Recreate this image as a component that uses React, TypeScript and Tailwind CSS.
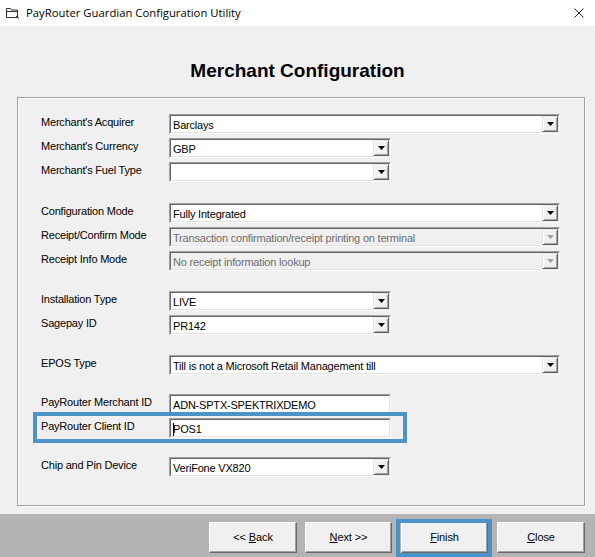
import React from 'react'

const FONT = { fontFamily: '"Liberation Sans", Arial, sans-serif' }

interface ComboProps {
  value: string
  wide?: boolean
  disabled?: boolean
  arrow?: boolean
  cursor?: boolean
}

const Arrow: React.FC<{ disabled?: boolean }> = ({ disabled }) => (
  <div className="w-[16px] h-full flex items-center justify-center bg-[#f0f0f0] border border-t-[#e3e3e3] border-l-[#e3e3e3] border-r-[#696969] border-b-[#696969] shadow-[inset_1px_1px_0_#fff,inset_-1px_-1px_0_#a0a0a0]">
    <svg width="7" height="4" viewBox="0 0 7 4">
      <path d="M0 0h7L3.5 4z" fill={disabled ? '#a0a0a0' : '#000'} />
    </svg>
  </div>
)

// sunken win32 style box, used for combos and text fields
const Field: React.FC<ComboProps> = ({ value, wide, disabled, arrow = true, cursor }) => (
  <div
    className={`h-[20px] border border-t-[#a0a0a0] border-l-[#a0a0a0] border-r-white border-b-white ${
      wide ? 'w-[391px]' : 'w-[222px]'
    }`}
  >
    <div className="h-full flex border border-t-[#696969] border-l-[#696969] border-r-[#e3e3e3] border-b-[#e3e3e3]">
      <div
        className={`flex-1 flex items-center pl-[2px] pt-[2px] text-[11px] leading-[14px] tracking-[-0.2px] whitespace-nowrap overflow-hidden ${
          disabled ? 'bg-[#f0f0f0] text-[#6d6d6d]' : 'bg-white text-black'
        }`}
      >
        {cursor && <span className="w-px h-[13px] bg-black mr-[-1px]" />}
        {value}
      </div>
      {arrow && <Arrow disabled={disabled} />}
    </div>
  </div>
)

const Row: React.FC<{ label: string; className?: string; children: React.ReactNode }> = ({
  label,
  className = '',
  children,
}) => (
  <div className={`flex items-start h-[20px] mb-[4px] ${className}`}>
    <div className="w-[128px] text-[11px] leading-[16px] tracking-[-0.2px] text-black whitespace-nowrap">
      {label}
    </div>
    {children}
  </div>
)

const Button: React.FC<{ children: React.ReactNode; w: string }> = ({ children, w }) => (
  <button
    className={`${w} h-[31px] bg-[#f0f0f0] border border-t-white border-l-white border-r-[#696969] border-b-[#696969] shadow-[inset_-1px_-1px_0_#a0a0a0] text-[11px] tracking-[-0.1px] text-black`}
  >
    {children}
  </button>
)

export default function App() {
  return (
    <div className="w-[595px] h-[557px] bg-[#f0f0f0] flex flex-col overflow-hidden" style={FONT}>
      {/* Title bar */}
      <div className="h-[26px] bg-white flex items-center pl-[6px] pr-[11px]">
        <svg width="14" height="12" viewBox="0 0 14 12" className="mr-[6px]">
          <path d="M0.5 1.5h4l1 1.5h6v7.5h-11z" fill="none" stroke="#333" />
          <path d="M0.5 4.5h11" stroke="#333" />
          <path d="M10 9l3 2.5" stroke="#333" />
        </svg>
        <span
          className="text-[11.3px] text-black"
          style={{ fontFamily: '"Open Sans", "Liberation Sans", sans-serif' }}
        >
          PayRouter Guardian Configuration Utility
        </span>
        <div className="flex-1" />
        <svg width="10" height="10" viewBox="0 0 10 10">
          <path d="M0.5 0.5l9 9M9.5 0.5l-9 9" stroke="#222" strokeWidth="1" />
        </svg>
      </div>

      {/* Heading */}
      <div className="h-[71px] pt-[35px] text-center">
        <h1 className="text-[19px] leading-[19px] font-bold text-black">Merchant Configuration</h1>
      </div>

      {/* Group box */}
      <div className="ml-[17px] w-[568px] h-[409px] flex flex-col border border-[#a0a0a0] shadow-[inset_1px_1px_0_#fff,1px_1px_0_#fff] pt-[16px] pl-[23px]">
        <Row label="Merchant's Acquirer">
          <Field value="Barclays" wide />
        </Row>
        <Row label="Merchant's Currency">
          <Field value="GBP" />
        </Row>
        <Row label="Merchant's Fuel Type">
          <Field value="" />
        </Row>

        <Row label="Configuration Mode" className="mt-[17px]">
          <Field value="Fully Integrated" wide />
        </Row>
        <Row label="Receipt/Confirm Mode">
          <Field value="Transaction confirmation/receipt printing on terminal" wide disabled />
        </Row>
        <Row label="Receipt Info Mode">
          <Field value="No receipt information lookup" wide disabled />
        </Row>

        <Row label="Installation Type" className="mt-[16px]">
          <Field value="LIVE" />
        </Row>
        <Row label="Sagepay ID">
          <Field value="PR142" />
        </Row>

        <Row label="EPOS Type" className="mt-[16px]">
          <Field value="Till is not a Microsoft Retail Management till" wide />
        </Row>

        <Row label="PayRouter Merchant ID" className="mt-[15px]">
          <Field value="ADN-SPTX-SPEKTRIXDEMO" arrow={false} />
        </Row>
        <Row label="PayRouter Client ID" className="relative">
          <Field value="POS1" arrow={false} cursor />
          {/* highlight annotation */}
          <div className="absolute left-[-8px] top-[-6px] w-[374px] h-[31px] border-[4px] border-[#4d93c8] pointer-events-none" />
        </Row>

        <Row label="Chip and Pin Device" className="mt-[15px]">
          <Field value="VeriFone VX820" />
        </Row>
      </div>

      {/* Button bar */}
      <div className="mt-[8px] h-[43px] bg-[#b4b4b4] flex items-start justify-end pt-[8px] pr-[10px]">
        <Button w="w-[88px]">
          &lt;&lt; <span className="underline">B</span>ack
        </Button>
        <div className="w-[8px]" />
        <Button w="w-[87px]">
          <span className="underline">N</span>ext &gt;&gt;
        </Button>
        <div className="w-[9px]" />
        <div className="relative">
          <Button w="w-[87px]">
            <span className="underline">F</span>inish
          </Button>
          <div className="absolute left-[-5px] top-[-3px] w-[96px] h-[38px] border-[4px] border-[#4d93c8] pointer-events-none" />
        </div>
        <div className="w-[9px]" />
        <Button w="w-[88px]">
          <span className="underline">C</span>lose
        </Button>
      </div>
    </div>
  )
}
